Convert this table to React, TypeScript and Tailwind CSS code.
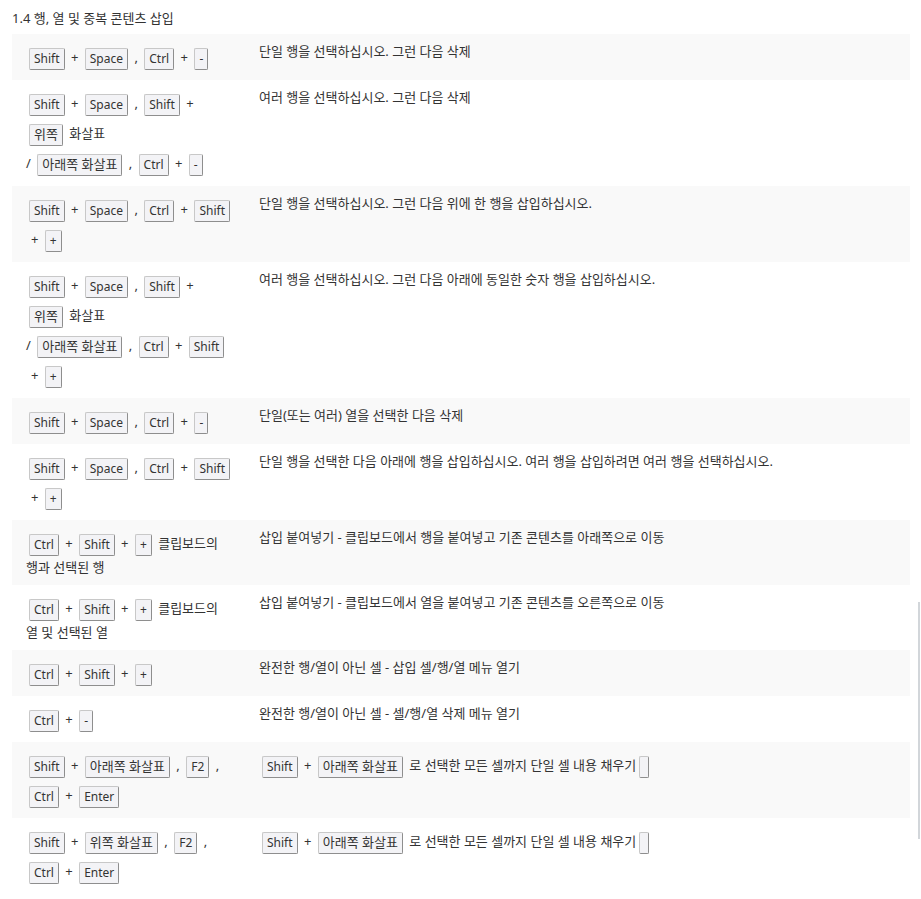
import React from "react";

type Row = { left: string[]; right: string[] };

const rows: Row[] = [
  { left: ["[Shift] + [Space] , [Ctrl] + [-]"], right: ["단일 행을 선택하십시오. 그런 다음 삭제"] },
  {
    left: ["[Shift] + [Space] , [Shift] +", "[위쪽] 화살표", "/ [아래쪽 화살표] , [Ctrl] + [-]"],
    right: ["여러 행을 선택하십시오. 그런 다음 삭제"],
  },
  {
    left: ["[Shift] + [Space] , [Ctrl] + [Shift]", "+ [+]"],
    right: ["단일 행을 선택하십시오. 그런 다음 위에 한 행을 삽입하십시오."],
  },
  {
    left: ["[Shift] + [Space] , [Shift] +", "[위쪽] 화살표", "/ [아래쪽 화살표] , [Ctrl] + [Shift]", "+ [+]"],
    right: ["여러 행을 선택하십시오. 그런 다음 아래에 동일한 숫자 행을 삽입하십시오."],
  },
  { left: ["[Shift] + [Space] , [Ctrl] + [-]"], right: ["단일(또는 여러) 열을 선택한 다음 삭제"] },
  {
    left: ["[Shift] + [Space] , [Ctrl] + [Shift]", "+ [+]"],
    right: ["단일 행을 선택한 다음 아래에 행을 삽입하십시오. 여러 행을 삽입하려면 여러 행을 선택하십시오."],
  },
  {
    left: ["[Ctrl] + [Shift] + [+] 클립보드의", "행과 선택된 행"],
    right: ["삽입 붙여넣기 - 클립보드에서 행을 붙여넣고 기존 콘텐츠를 아래쪽으로 이동"],
  },
  {
    left: ["[Ctrl] + [Shift] + [+] 클립보드의", "열 및 선택된 열"],
    right: ["삽입 붙여넣기 - 클립보드에서 열을 붙여넣고 기존 콘텐츠를 오른쪽으로 이동"],
  },
  { left: ["[Ctrl] + [Shift] + [+]"], right: ["완전한 행/열이 아닌 셀 - 삽입 셀/행/열 메뉴 열기"] },
  { left: ["[Ctrl] + [-]"], right: ["완전한 행/열이 아닌 셀 - 셀/행/열 삭제 메뉴 열기"] },
  {
    left: ["[Shift] + [아래쪽 화살표] , [F2] ,", "[Ctrl] + [Enter]"],
    right: ["[Shift] + [아래쪽 화살표] 로 선택한 모든 셀까지 단일 셀 내용 채우기[]"],
  },
  {
    left: ["[Shift] + [위쪽 화살표] , [F2] ,", "[Ctrl] + [Enter]"],
    right: ["[Shift] + [아래쪽 화살표] 로 선택한 모든 셀까지 단일 셀 내용 채우기[]"],
  },
];

function Kbd({ label }: { label: string }) {
  // latin key names render a touch smaller than the hangul ones
  const latin = /^[\x00-\x7f]*$/.test(label);
  return (
    <kbd
      className={`inline-flex h-[22px] items-center align-middle px-[4px] mx-[3px] border border-[#c8c8c8] border-r-[#8e8e8e] border-b-[#8e8e8e] rounded-[2px] bg-[#f3f3f6] leading-none text-[#333] [font-family:inherit] ${
        latin ? "text-[12px]" : "text-[13px]"
      }`}
    >
      {label}
    </kbd>
  );
}

function Line({ text }: { text: string }) {
  const parts = text.split(/(\[[^\]]*\])/).filter((p) => p !== "");
  const hasKbd = parts.some((p) => p.startsWith("["));
  const indent = text.startsWith("+ ") ? "pl-[5px]" : "";
  return (
    <div className={`${hasKbd ? "h-[30px] leading-[30px] whitespace-nowrap" : "leading-[19px]"} ${indent}`}>
      {parts.map((p, i) =>
        p.startsWith("[") ? <Kbd key={i} label={p.slice(1, -1)} /> : <span key={i}>{p}</span>
      )}
    </div>
  );
}

export default function App() {
  return (
    <div
      className="relative min-h-[899px] bg-white pl-[12px] pr-[11px] pt-[8px] text-[13px] text-[#333]"
      style={{ fontFamily: '"Noto Sans", "Noto Sans CJK KR", sans-serif' }}
    >
      <div className="h-[20px] leading-[20px] text-[13px] mb-[6px]">1.4 행, 열 및 중복 콘텐츠 삽입</div>
      <div className="flex flex-col">
        {rows.map((row, i) => (
          <div key={i} className={`flex py-[8px] ${i % 2 === 0 ? "bg-[#f9f9f9]" : "bg-white"}`}>
            <div className="w-[233px] shrink-0 pl-[14px]">
              {row.left.map((l, j) => (
                <Line key={j} text={l} />
              ))}
            </div>
            <div className="flex-1 pl-[14px]">
              {row.right.map((l, j) => (
                <Line key={j} text={l} />
              ))}
            </div>
          </div>
        ))}
      </div>
      <div className="absolute right-[1px] top-[602px] h-[237px] w-[2px] bg-[#d2d6da]" />
    </div>
  );
}
